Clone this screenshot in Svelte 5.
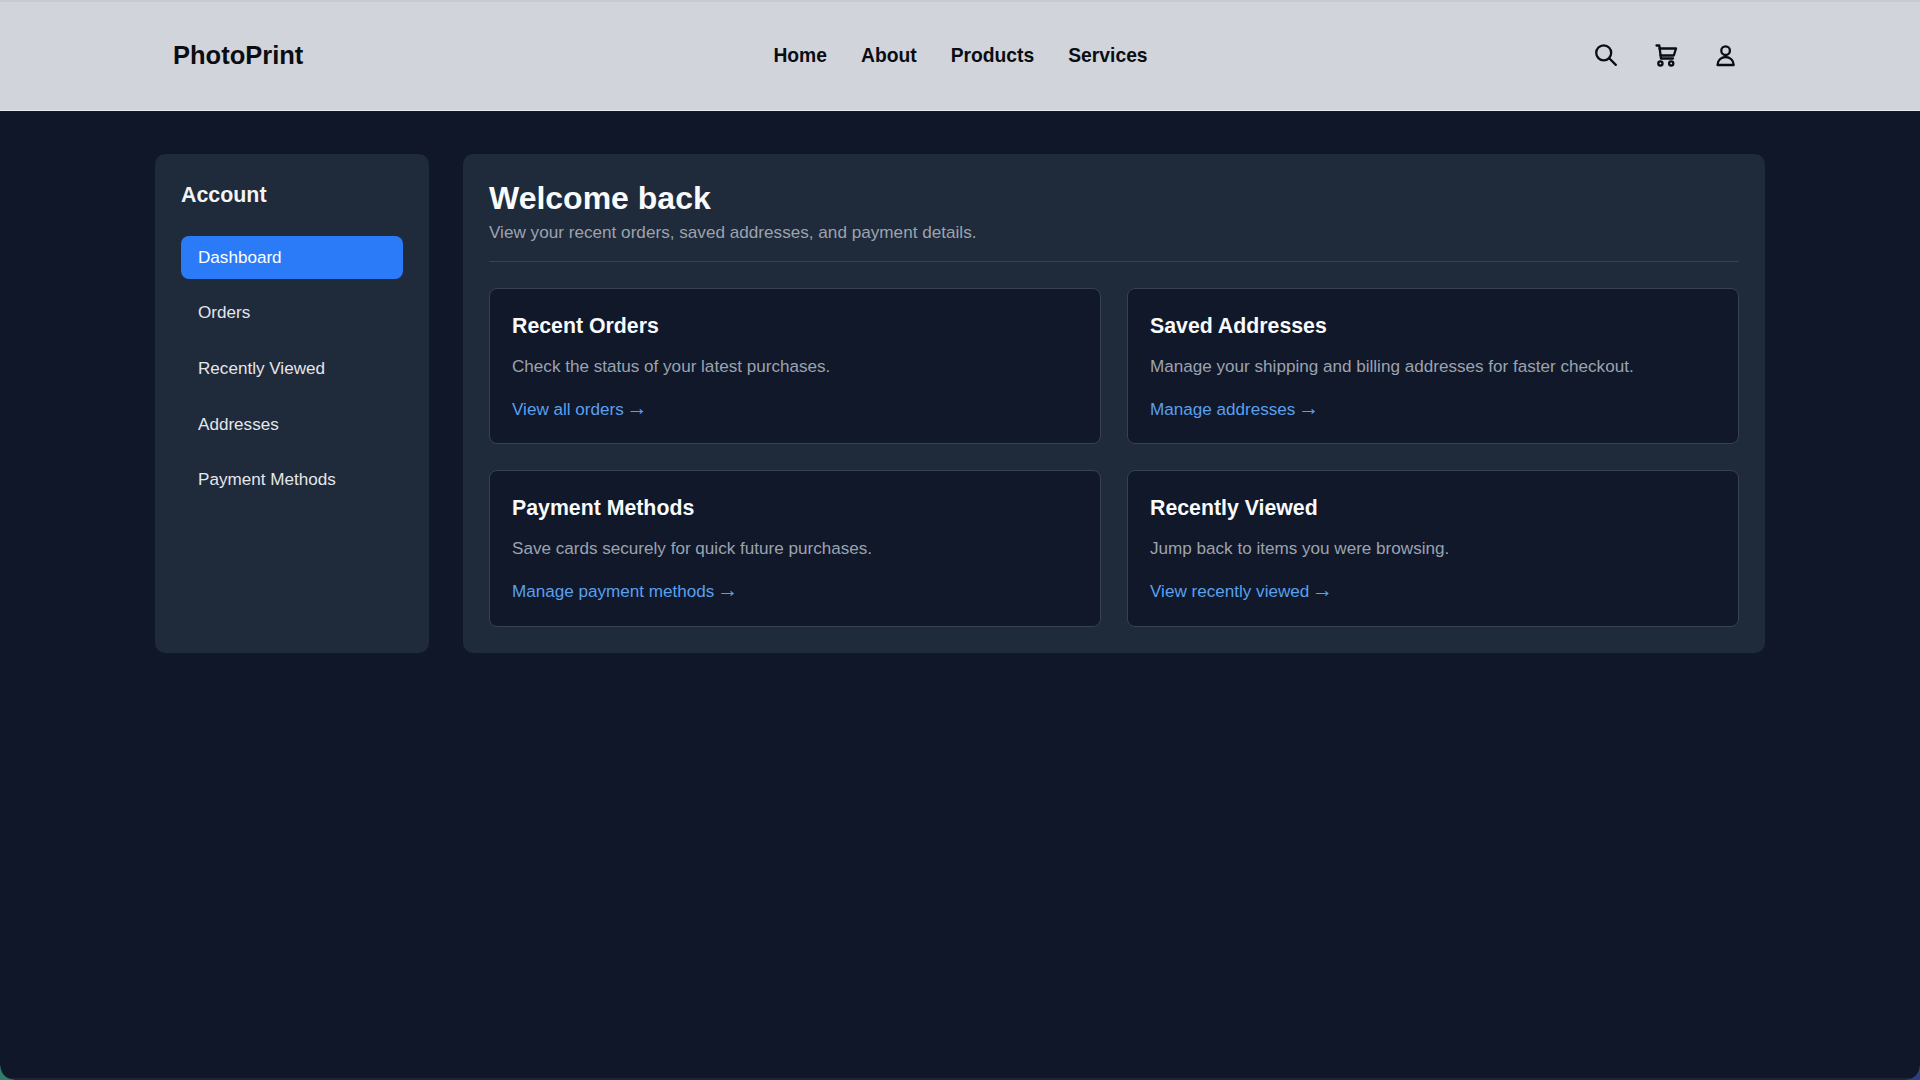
<script>
  const navLinks = ['Home', 'About', 'Products', 'Services'];
  const sideLinks = ['Dashboard', 'Orders', 'Recently Viewed', 'Addresses', 'Payment Methods'];
  const cards = [
    { title: 'Recent Orders', text: 'Check the status of your latest purchases.', link: 'View all orders' },
    { title: 'Saved Addresses', text: 'Manage your shipping and billing addresses for faster checkout.', link: 'Manage addresses' },
    { title: 'Payment Methods', text: 'Save cards securely for quick future purchases.', link: 'Manage payment methods' },
    { title: 'Recently Viewed', text: 'Jump back to items you were browsing.', link: 'View recently viewed' }
  ];
</script>

<header class="topbar">
  <a class="logo" href="#top">PhotoPrint</a>
  <nav class="main-nav">
    {#each navLinks as item}
      <a href="#top">{item}</a>
    {/each}
  </nav>
  <div class="icons">
    <svg viewBox="0 0 24 24" aria-label="Search">
      <circle cx="9.7" cy="9.8" r="7.5" />
      <path d="M15.2 15.3l6.6 6.6" />
    </svg>
    <svg viewBox="0 0 24 24" aria-label="Cart">
      <path d="M2.5 2.5h2.8L7 15.5h12" />
      <path d="M5.5 5.5H22l-2.2 7H6.6" />
      <circle cx="6.4" cy="20.4" r="2.1" />
      <circle cx="17.2" cy="20.4" r="2.1" />
    </svg>
    <svg viewBox="0 0 24 24" aria-label="Account">
      <circle cx="11.6" cy="7.7" r="4.3" />
      <path d="M3.5 22c0-4.7 3.7-8 8.1-8s8.1 3.3 8.1 8z" />
    </svg>
  </div>
</header>

<main class="page">
  <aside class="sidebar">
    <h2>Account</h2>
    <ul>
      {#each sideLinks as item, i}
        <li><a href="#top" class:active={i === 0}>{item}</a></li>
      {/each}
    </ul>
  </aside>

  <section class="content">
    <div class="intro">
      <h1>Welcome back</h1>
      <p>View your recent orders, saved addresses, and payment details.</p>
    </div>
    <div class="grid">
      {#each cards as card}
        <article class="card">
          <h3>{card.title}</h3>
          <p>{card.text}</p>
          <a href="#top">{card.link} <span class="arrow">→</span></a>
        </article>
      {/each}
    </div>
  </section>
</main>

<div class="bottom-line"></div>
<div class="corner left"></div>
<div class="corner right"></div>

<style>
  :global(body) {
    margin: 0;
    background: #0f1728;
    font-family: "Liberation Sans", Arial, sans-serif;
  }

  a {
    text-decoration: none;
  }

  .topbar {
    height: 111px;
    box-sizing: border-box;
    padding: 0 172px 0 173px;
    display: grid;
    grid-template-columns: 1fr auto 1fr;
    align-items: center;
    background: #d1d5db;
    border-bottom: 1px solid #e8eaee;
    box-shadow: inset 0 2px 0 #c6cbd3;
  }

  .logo {
    font-size: 25.5px;
    font-weight: 700;
    color: #0b0d12;
  }

  .main-nav {
    display: flex;
    gap: 34px;
    padding-top: 1px;
  }

  .main-nav a {
    font-size: 19.3px;
    font-weight: 700;
    color: #0b0d12;
  }

  .icons {
    display: flex;
    justify-content: flex-end;
    gap: 36px;
    margin-right: 10.5px;
  }

  .icons svg {
    width: 24px;
    height: 24px;
    fill: none;
    stroke: #0b0d12;
    stroke-width: 2.3;
    stroke-linecap: round;
    stroke-linejoin: round;
  }

  .page {
    display: flex;
    align-items: stretch;
    gap: 34px;
    width: 1610px;
    margin: 43px auto 0;
  }

  .sidebar {
    width: 274px;
    flex-shrink: 0;
    box-sizing: border-box;
    padding: 26px;
    background: #1f2a3a;
    border-radius: 10px;
  }

  .sidebar h2 {
    margin: 0 0 25.6px;
    font-size: 21.4px;
    line-height: 30px;
    font-weight: 700;
    color: #f3f4f6;
  }

  .sidebar ul {
    list-style: none;
    margin: 0;
    padding: 0;
    display: flex;
    flex-direction: column;
    gap: 12.7px;
  }

  .sidebar a {
    display: block;
    padding: 0 17px;
    height: 43px;
    line-height: 43px;
    font-size: 17.1px;
    color: #e5e7eb;
    border-radius: 8px;
  }

  .sidebar a.active {
    background: #2b7bf8;
    color: #fff;
  }

  .content {
    flex: 1;
    box-sizing: border-box;
    padding: 26px;
    background: #1f2a3a;
    border-radius: 10px;
  }

  .intro {
    padding-bottom: 17.5px;
    border-bottom: 1px solid #374151;
    margin-bottom: 26.3px;
  }

  .intro h1 {
    margin: 0;
    font-size: 32px;
    line-height: 37px;
    font-weight: 700;
    color: #f9fafb;
  }

  .intro p {
    margin: 2.5px 0 0;
    font-size: 17.15px;
    line-height: 24px;
    color: #9ca3af;
  }

  .grid {
    display: grid;
    grid-template-columns: 1fr 1fr;
    gap: 26px;
  }

  .card {
    box-sizing: border-box;
    padding: 23px 22px 21.6px;
    background: #10182a;
    border: 1px solid #374151;
    border-radius: 8px;
  }

  .card h3 {
    margin: 0 0 14.7px;
    font-size: 21.3px;
    line-height: 28px;
    font-weight: 700;
    color: #f9fafb;
  }

  .card p {
    margin: 0 0 18.9px;
    font-size: 17.1px;
    line-height: 24px;
    color: #9ca3af;
  }

  .card a {
    display: block;
    font-size: 17.1px;
    line-height: 24px;
    color: #5aa0ee;
  }

  .arrow {
    font-size: 21px;
    line-height: 0;
    margin-left: -2px;
  }

  .bottom-line {
    position: fixed;
    left: 0;
    right: 0;
    bottom: 0;
    height: 2px;
    background: #1b2536;
  }

  .corner {
    position: fixed;
    bottom: 0;
    width: 14px;
    height: 14px;
  }

  .corner.left {
    left: 0;
    background: radial-gradient(circle at 100% 0, transparent 13px, #2f7d6a 14px);
  }

  .corner.right {
    right: 0;
    background: radial-gradient(circle at 0 0, transparent 13px, #2c3f80 14px);
  }
</style>
